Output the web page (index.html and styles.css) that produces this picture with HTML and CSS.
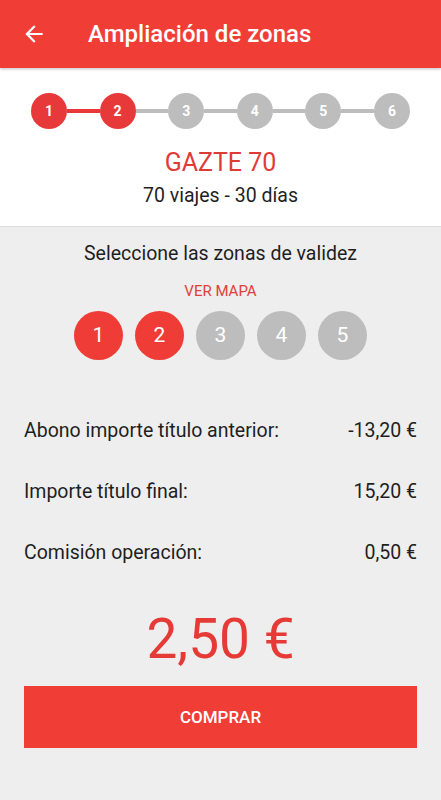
FILE: index.html
```html
<!DOCTYPE html>
<html lang="es">
<head>
  <meta charset="UTF-8">
  <meta name="viewport" content="width=device-width, initial-scale=1.0">
  <title>Ampliación de zonas</title>
  <link rel="stylesheet" href="styles.css">
</head>
<body>
  <header class="topbar">
    <svg class="back" width="26" height="26" viewBox="0 0 24 24"><path fill="#fff" d="M20 11H7.83l5.59-5.59L12 4l-8 8 8 8 1.41-1.41L7.83 13H20v-2z"/></svg>
    <h1>Ampliación de zonas</h1>
  </header>

  <section class="summary">
    <div class="steps">
      <span class="step done">1</span>
      <span class="link done"></span>
      <span class="step done">2</span>
      <span class="link"></span>
      <span class="step">3</span>
      <span class="link"></span>
      <span class="step">4</span>
      <span class="link"></span>
      <span class="step">5</span>
      <span class="link"></span>
      <span class="step">6</span>
    </div>
    <div class="ticket-name">GAZTE 70</div>
    <div class="ticket-info">70 viajes - 30 días</div>
  </section>

  <main class="content">
    <p class="zones-title">Seleccione las zonas de validez</p>
    <a class="map-link" href="#">VER MAPA</a>
    <div class="zones">
      <span class="zone active">1</span>
      <span class="zone active">2</span>
      <span class="zone">3</span>
      <span class="zone">4</span>
      <span class="zone">5</span>
    </div>

    <div class="lines">
      <div class="line"><span>Abono importe título anterior:</span><span>-13,20 €</span></div>
      <div class="line"><span>Importe título final:</span><span>15,20 €</span></div>
      <div class="line"><span>Comisión operación:</span><span>0,50 €</span></div>
    </div>

    <div class="total">2,50 €</div>
    <button class="buy">COMPRAR</button>
  </main>
</body>
</html>
```

FILE: styles.css
```css
body {
  margin: 0;
  font-family: Roboto, "Noto Sans", sans-serif;
  background-color: #eeeeee;
  color: #1f1f1f;
}
.topbar {
  display: flex;
  align-items: center;
  height: 68px;
  padding-left: 21px;
  background-color: #f03e37;
  color: white;
  box-shadow: 0 1px 3px rgba(0, 0, 0, 0.25);
  position: relative;
}
.back {
  display: block;
}
.topbar h1 {
  margin: 0 0 0 41px;
  font-size: 24px;
  font-weight: 500;
}
.summary {
  background-color: white;
  padding: 25px 31px 19px;
  border-bottom: 1px solid #dddddd;
  text-align: center;
}
.steps {
  display: flex;
  align-items: center;
}
.step {
  width: 36px;
  height: 36px;
  border-radius: 50%;
  background-color: #bdbdbd;
  color: white;
  font-size: 14px;
  font-weight: 700;
  line-height: 36px;
  text-align: center;
  flex-shrink: 0;
}
.step.done {
  background-color: #e8393a;
}
.link {
  flex: 1;
  height: 4px;
  background-color: #bdbdbd;
}
.link.done {
  background-color: #e8393a;
}
.ticket-name {
  margin-top: 20px;
  font-size: 25px;
  line-height: 28px;
  color: #df3b36;
}
.ticket-info {
  margin-top: 8px;
  font-size: 19.5px;
  line-height: 22px;
}
.content {
  padding: 16px 24px 40px 24px;
  text-align: center;
}
.zones-title {
  margin: 0;
  font-size: 19.5px;
  line-height: 22px;
}
.map-link {
  display: block;
  margin-top: 17px;
  font-size: 15px;
  line-height: 18px;
  color: #e0403b;
  text-decoration: none;
}
.zones {
  display: flex;
  justify-content: center;
  gap: 12px;
  margin-top: 11px;
}
.zone {
  width: 49px;
  height: 49px;
  border-radius: 50%;
  background-color: #bdbdbd;
  color: white;
  font-size: 21px;
  line-height: 49px;
}
.zone.active {
  background-color: #ef3c36;
}
.lines {
  display: flex;
  flex-direction: column;
  gap: 39px;
  margin-top: 60px;
}
.line {
  display: flex;
  justify-content: space-between;
  font-size: 19.5px;
  line-height: 22px;
}
.total {
  margin-top: 43px;
  font-size: 55px;
  line-height: 64px;
  color: #e53a35;
}
.buy {
  display: block;
  width: 100%;
  height: 62px;
  margin-top: 15px;
  border: none;
  background-color: #f03e37;
  color: white;
  font-family: Roboto, sans-serif;
  font-size: 17px;
  font-weight: 500;
}
```
